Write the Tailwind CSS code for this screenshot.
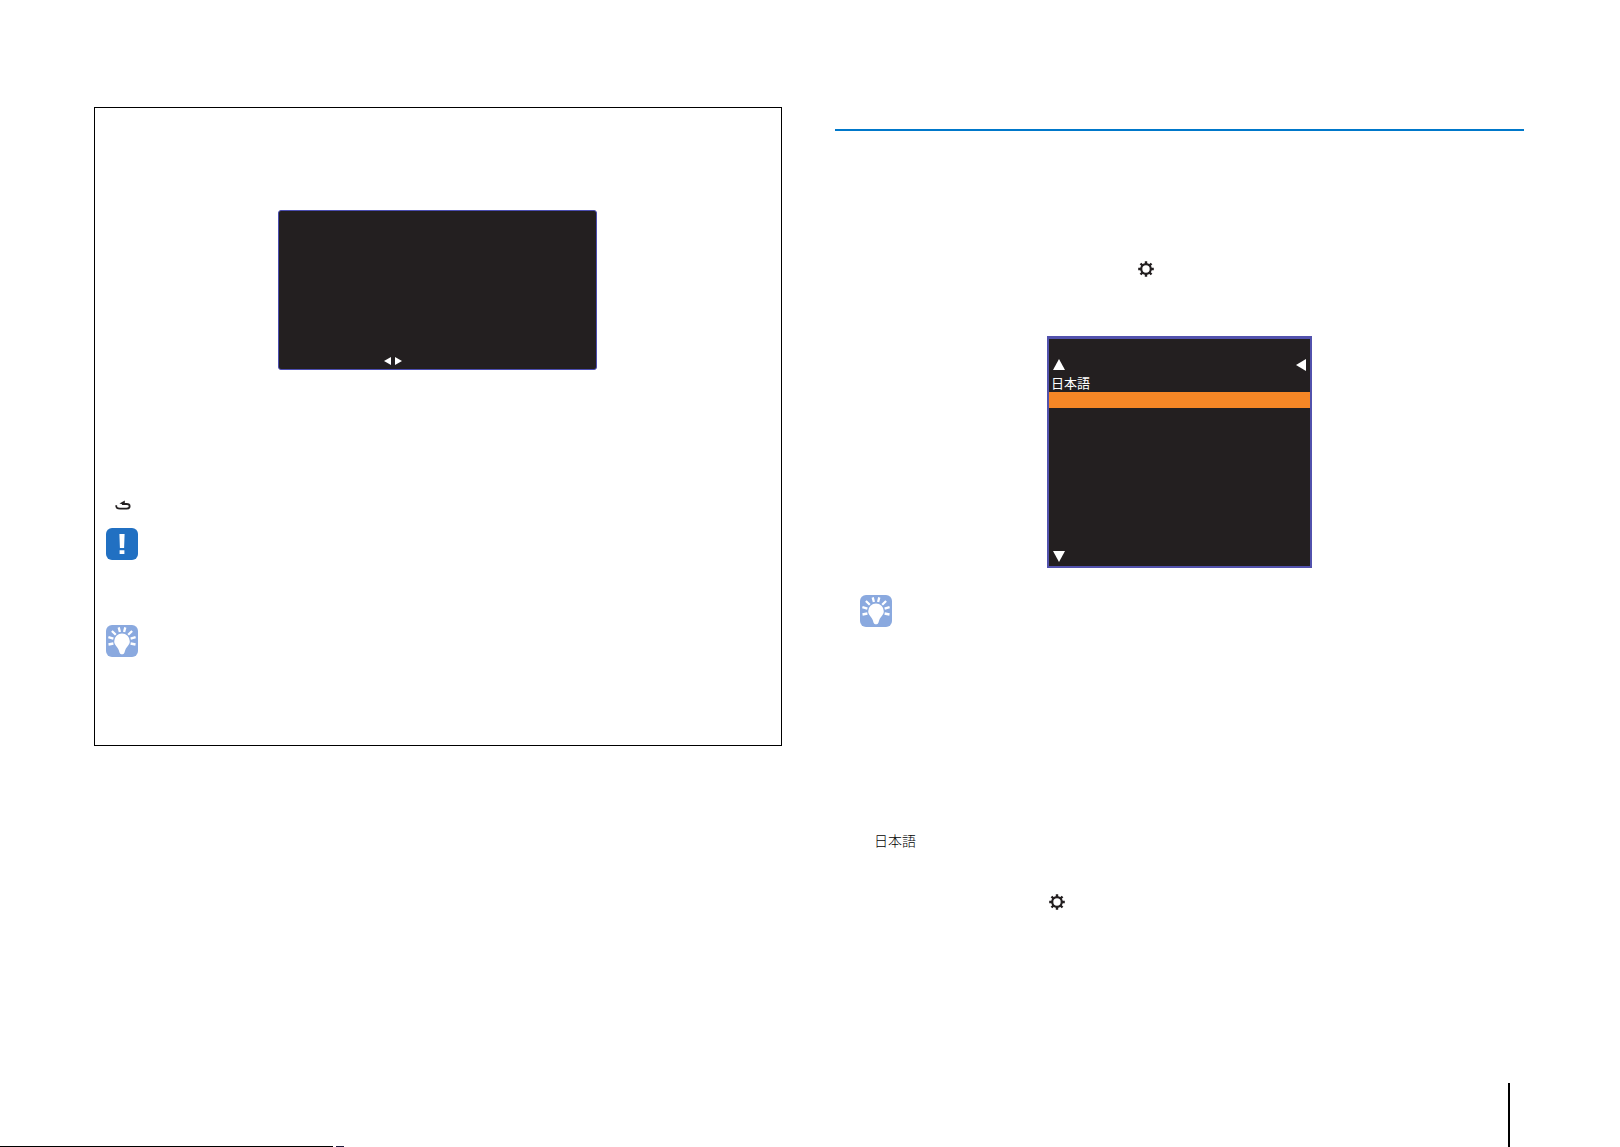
<!DOCTYPE html>
<html lang="ja">
<head>
    <meta charset="UTF-8">
    <meta name="viewport" content="width=device-width, initial-scale=1.0">
    <title>日本語</title>
    <script src="https://cdn.jsdelivr.net/npm/@tailwindcss/browser@4"></script>
</head>
<body class="bg-white text-[#231f20] font-['Noto_Sans_CJK_JP',sans-serif] min-h-screen flex flex-col">
    <!-- Shared icons -->
    <svg class="hidden" aria-hidden="true">
        <symbol id="gear" viewBox="0 0 16 16">
            <g fill="none" stroke="#231f20">
                <circle cx="8" cy="8" r="4.8" stroke-width="2.2"/>
                <path stroke-width="2.4" d="M8 .2V3M8 13v2.800M.2 8H3M13 8h2.800M2.500 2.500l2 2M11.500 11.500l2 2M2.500 13.500l2-2M11.500 4.500l2-2"/>
            </g>
        </symbol>
        <symbol id="bulb" viewBox="0 0 32 32">
            <rect width="32" height="32" rx="6" fill="#8aa9df"/>
            <path fill="#fff" d="M16 8.500a7.800 7.800 0 0 0-7.800 7.800c0 4 3.300 5.200 4.500 8.700l.9 2.800q.4 1.400 1.600 1.400h1.600q1.200 0 1.600-1.400l.9-2.800c1.200-3.500 4.500-4.700 4.500-8.700A7.800 7.800 0 0 0 16 8.500z"/>
            <path stroke="#fff" stroke-width="2.300" fill="none" d="M13.900 7l-1.200-4.600M18.100 7l1.200-4.600M9.800 9.800L5.900 6M22.200 9.800L26.100 6M7.400 13.600l-5-1.500M24.600 13.600l5-1.500M7.400 18.500l-4.900 1M24.600 18.500l4.900 1"/>
        </symbol>
    </svg>

    <main class="grid grid-cols-2 gap-[52px] pt-[107px] pl-[94px] pr-24">
        <!-- Left column -->
        <section class="mr-px h-[639px] border border-black flex flex-col items-start pl-[11px] pr-[13px] pt-[102px]">
            <div class="self-center w-[319px] h-40 rounded-[3px] border border-[#4b4db0] bg-[#231f20] flex items-end pl-[105px] pb-1">
                <svg class="w-[18px] h-2" viewBox="0 0 18 8" fill="#fff">
                    <path d="M7 0v8L0 4zM11 0v8l7-4z"/>
                </svg>
            </div>
            <svg class="mt-[130px] ml-[9px] w-4 h-[11px]" viewBox="0 0 16 11">
                <path fill="none" stroke="#231f20" stroke-width="1.800" d="M1.200 5.300C1 8.200 2.500 8.700 5 8.700h6.500c4.200 0 4.200-4.700 0-4.700H7"/>
                <path fill="#231f20" d="M4.500 3.600L9.800.6v4.300z"/>
            </svg>
            <svg class="mt-[17px] size-8" viewBox="0 0 32 32">
                <rect width="32" height="32" rx="6" fill="#2170c2"/>
                <path fill="#fff" d="M13.400 6h5.200l-.5 14h-4.200zM13.600 22.300h4.800v3.700h-4.800z"/>
            </svg>
            <svg class="mt-[65px] size-8"><use href="#bulb"/></svg>
        </section>

        <!-- Right column -->
        <section class="flex flex-col items-start pt-[22px]">
            <div class="self-stretch h-[2px] bg-[#0078ca]"></div>
            <svg class="mt-[130px] ml-[303px] size-4"><use href="#gear"/></svg>

            <!-- Language menu -->
            <div class="self-center mt-[59px] w-[265px] h-[232px] border-2 border-t-3 border-[#5252ad] bg-[#231f20] text-white flex flex-col pt-5 pb-1">
                <div class="flex justify-between px-1">
                    <svg class="w-3 h-[11px]" viewBox="0 0 12 11" fill="#fff"><path d="M6 0l6 11H0z"/></svg>
                    <svg class="w-[10px] h-3" viewBox="0 0 10 12" fill="#fff"><path d="M10 0v12L0 6z"/></svg>
                </div>
                <p class="mt-[3px] mb-px pl-[2px] text-[13px] leading-[17px]">日本語</p>
                <div class="h-4 bg-[#f68726]"></div>
                <svg class="mt-auto ml-1 w-3 h-[11px]" viewBox="0 0 12 11" fill="#fff"><path d="M0 0h12L6 11z"/></svg>
            </div>

            <svg class="mt-[27px] ml-[25px] size-8"><use href="#bulb"/></svg>
            <p class="mt-[203px] ml-[39px] text-[14px] leading-5 font-light text-black">日本語</p>
            <svg class="mt-11 ml-[214px] size-4"><use href="#gear"/></svg>
        </section>
    </main>

    <footer class="mt-auto flex items-end justify-between pr-[110px]">
        <div class="flex gap-[3px]">
            <div class="w-[333px] h-px bg-black"></div>
            <div class="w-2 h-px bg-[#1a1a3a]"></div>
        </div>
        <div class="w-[2px] h-16 bg-black"></div>
    </footer>
</body>
</html>
